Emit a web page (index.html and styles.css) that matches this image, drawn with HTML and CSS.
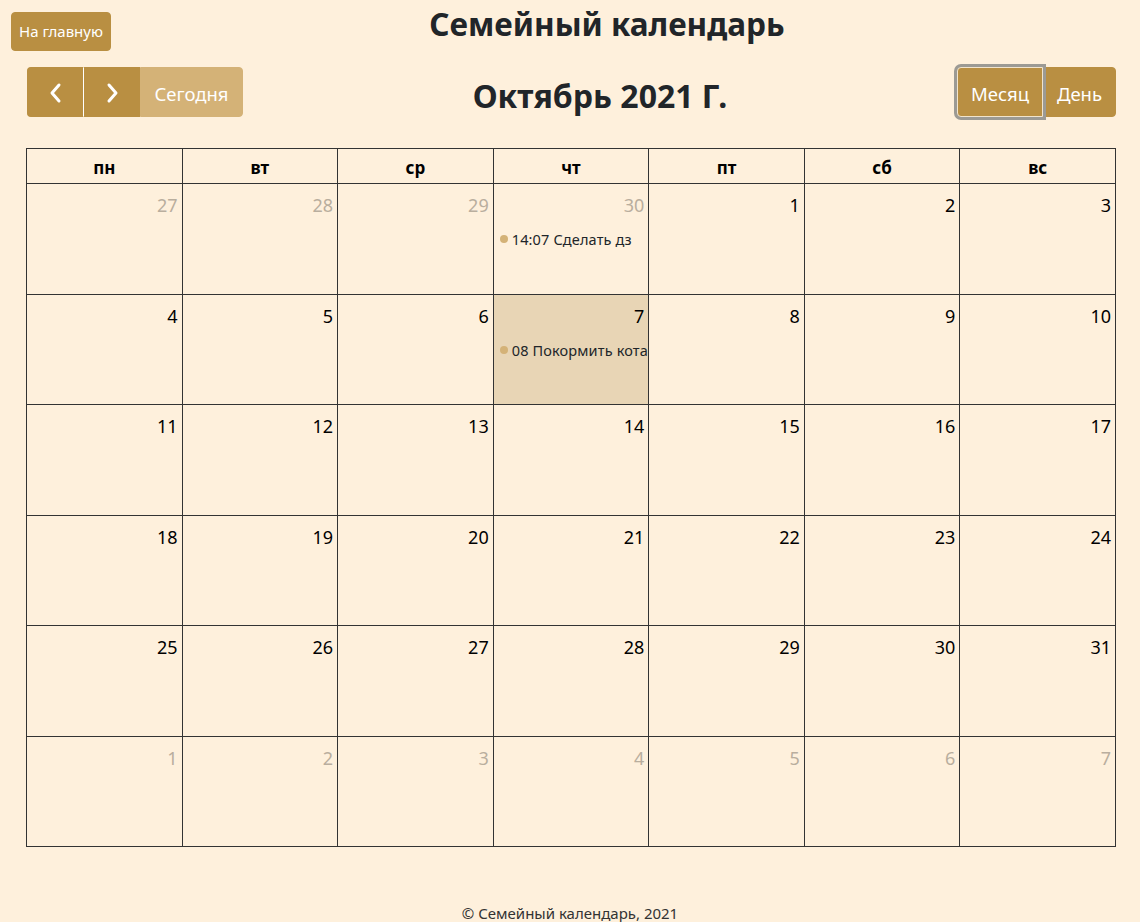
FILE: index.html
```html
<!DOCTYPE html>
<html lang="ru">
<head>
<meta charset="utf-8">
<title>Семейный календарь</title>
<link rel="stylesheet" href="styles.css">
</head>
<body>
<header class="top">
  <a class="btn btn-home" href="#">На главную</a>
  <h1 class="site-title">Семейный календарь</h1>
</header>
<main class="cal">
  <div class="toolbar">
    <div class="chunk">
      <div class="group">
        <button class="btn btn-nav" aria-label="prev">
          <svg width="14" height="22" viewBox="0 0 14 22"><path d="M10 3 L3 11 L10 19" fill="none" stroke="#fff" stroke-width="3" stroke-linecap="round" stroke-linejoin="round"/></svg>
        </button>
        <button class="btn btn-nav" aria-label="next">
          <svg width="14" height="22" viewBox="0 0 14 22"><path d="M4 3 L11 11 L4 19" fill="none" stroke="#fff" stroke-width="3" stroke-linecap="round" stroke-linejoin="round"/></svg>
        </button>
      </div>
      <button class="btn btn-today">Сегодня</button>
    </div>
    <h2 class="month-title">Октябрь 2021 Г.</h2>
    <div class="chunk group">
      <button class="btn btn-view active">Месяц</button>
      <button class="btn btn-view">День</button>
    </div>
  </div>
  <table class="grid">
    <thead>
      <tr><th>пн</th><th>вт</th><th>ср</th><th>чт</th><th>пт</th><th>сб</th><th>вс</th></tr>
    </thead>
    <tbody>
      <tr>
        <td class="other"><div class="num">27</div></td>
        <td class="other"><div class="num">28</div></td>
        <td class="other"><div class="num">29</div></td>
        <td class="other"><div class="num">30</div><div class="event"><span class="dot"></span>14:07 Сделать дз</div></td>
        <td><div class="num">1</div></td>
        <td><div class="num">2</div></td>
        <td><div class="num">3</div></td>
      </tr>
      <tr>
        <td><div class="num">4</div></td>
        <td><div class="num">5</div></td>
        <td><div class="num">6</div></td>
        <td class="today"><div class="num">7</div><div class="event"><span class="dot"></span>08 Покормить кота</div></td>
        <td><div class="num">8</div></td>
        <td><div class="num">9</div></td>
        <td><div class="num">10</div></td>
      </tr>
      <tr>
        <td><div class="num">11</div></td>
        <td><div class="num">12</div></td>
        <td><div class="num">13</div></td>
        <td><div class="num">14</div></td>
        <td><div class="num">15</div></td>
        <td><div class="num">16</div></td>
        <td><div class="num">17</div></td>
      </tr>
      <tr>
        <td><div class="num">18</div></td>
        <td><div class="num">19</div></td>
        <td><div class="num">20</div></td>
        <td><div class="num">21</div></td>
        <td><div class="num">22</div></td>
        <td><div class="num">23</div></td>
        <td><div class="num">24</div></td>
      </tr>
      <tr>
        <td><div class="num">25</div></td>
        <td><div class="num">26</div></td>
        <td><div class="num">27</div></td>
        <td><div class="num">28</div></td>
        <td><div class="num">29</div></td>
        <td><div class="num">30</div></td>
        <td><div class="num">31</div></td>
      </tr>
      <tr>
        <td class="other"><div class="num">1</div></td>
        <td class="other"><div class="num">2</div></td>
        <td class="other"><div class="num">3</div></td>
        <td class="other"><div class="num">4</div></td>
        <td class="other"><div class="num">5</div></td>
        <td class="other"><div class="num">6</div></td>
        <td class="other"><div class="num">7</div></td>
      </tr>
    </tbody>
  </table>
</main>
<footer class="foot">© Семейный календарь, 2021</footer>
</body>
</html>
```

FILE: styles.css
```css
* { box-sizing: border-box; }
html, body { margin: 0; padding: 0; }
body {
  background: #fef0dc;
  font-family: "Noto Sans", "Open Sans", sans-serif;
  color: #212529;
}
.top {
  display: grid;
  grid-template-columns: auto 1fr;
  align-items: start;
  padding: 12px 11px 0 11px;
}
.btn {
  font-family: inherit;
  border: 1px solid #b98f42;
  background: #b98f42;
  color: #fff;
  cursor: pointer;
  text-decoration: none;
}
.btn-home {
  display: inline-block;
  height: 39px;
  line-height: 37px;
  padding: 0 7px;
  font-size: 15px;
  border-radius: 4px;
}
.site-title {
  margin: 0;
  padding-right: 26px;
  text-align: center;
  font-size: 31.5px;
  font-weight: 700;
  line-height: 24px;
  color: #212529;
}
.cal {
  margin: 16px 24px 0 26px;
}
.toolbar {
  display: flex;
  justify-content: space-between;
  align-items: center;
  margin-bottom: 31px;
  padding-left: 1px;
}
.chunk { display: flex; }
.group { display: flex; }
.btn-nav {
  width: 57px;
  height: 50px;
  display: flex;
  align-items: center;
  justify-content: center;
  padding: 2px 0 0 0;
}
.group .btn-nav:first-child { border-radius: 4px 0 0 4px; border-right-color: #fff; width: 57px; }
.group .btn-nav + .btn-nav { border-radius: 0; width: 56px; border-left: 0; }
.btn-today {
  height: 50px;
  padding: 3px 10px 0 10px;
  font-size: 18.5px;
  background: #d4b277;
  border-color: #d4b277;
  color: #fff;
  border-radius: 0 4px 4px 0;
  width: 103px;
}
.month-title {
  margin: 0;
  font-size: 32px;
  font-weight: 700;
  color: #212529;
  padding-top: 6px;
}
.btn-view {
  height: 50px;
  font-size: 18.5px;
  padding: 3px 10px 0 10px;
}
.btn-view.active {
  border-radius: 4px 0 0 4px;
  border-color: #f2e4cc;
  box-shadow: 0 0 0 3px #9c9a94;
  width: 86px;
  position: relative;
}
.btn-view + .btn-view {
  border-radius: 0 4px 4px 0;
  width: 73px;
}
.grid {
  width: 1090px;
  border-collapse: collapse;
  table-layout: fixed;
}
.grid th, .grid td {
  border: 1px solid #333;
}
.grid th {
  height: 35px;
  font-size: 17px;
  font-weight: 700;
  color: #000;
  padding: 2px 0 0 0;
}
.grid td {
  height: 110.5px;
  vertical-align: top;
  padding: 0;
}
.num {
  text-align: right;
  font-size: 18px;
  padding: 9px 4px 0 0;
  line-height: 24px;
  color: #000;
}
.other .num { color: #b9ae9e; }
.today { background: #e8d5b5; }
.event {
  margin-top: 12px;
  padding-left: 6px;
  font-size: 14.5px;
  letter-spacing: 0.15px;
  line-height: 20px;
  white-space: nowrap;
  overflow: hidden;
  color: #212529;
  display: flex;
  align-items: center;
}
.dot {
  display: inline-block;
  width: 8px;
  height: 8px;
  border-radius: 50%;
  background: #d4b277;
  margin-right: 4px;
  flex: none;
}
.foot {
  text-align: center;
  font-size: 15px;
  color: #333;
  margin-top: 56px;
  line-height: 20px;
}
```
